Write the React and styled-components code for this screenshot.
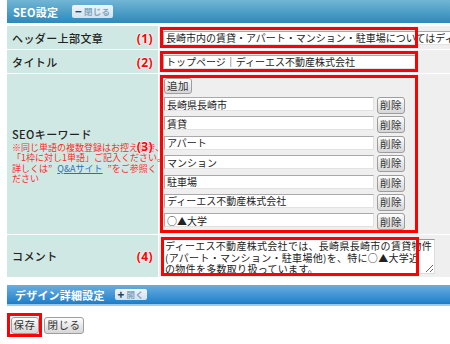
import React from "react";
import styled, { createGlobalStyle } from "styled-components";

const GlobalStyle = createGlobalStyle`
  html, body {
    margin: 0;
    padding: 0;
    background: #fff;
    overflow: hidden;
  }
  body {
    font-family: "Noto Sans CJK JP", "Noto Sans", sans-serif;
    color: #333;
  }
`;

const Page = styled.div`
  width: 450px;
  height: 344px;
  box-sizing: border-box;
  padding-left: 7px;
  overflow: hidden;
`;

const PanelBar = styled.div`
  height: ${(p) => p.$h}px;
  display: flex;
  align-items: center;
  gap: ${(p) => p.$gap}px;
  padding-left: ${(p) => p.$pad}px;
  box-sizing: border-box;
  background: ${(p) =>
    p.$tone === "blue"
      ? "linear-gradient(#6aaedf, #2a86cc 85%, #1f7cc4)"
      : "linear-gradient(#72b6d4, #3a92c0 80%, #2e89bb)"};
  border-bottom: ${(p) => (p.$tone === "blue" ? "2px solid #9ccbec" : "none")};
  color: #fff;
  font-size: 11px;
  font-weight: bold;
  letter-spacing: 0.2px;
`;

const ToggleButton = styled.span`
  display: inline-flex;
  align-items: center;
  gap: 2px;
  height: ${(p) => p.$h}px;
  padding: 0 3px;
  border-radius: 2px;
  background: linear-gradient(#eef4f8, #d3e2ec);
  color: #7ea6c0;
  font-size: 8.5px;
  font-weight: bold;
  line-height: 1;
  b {
    color: #1d4b6b;
    font-size: 11px;
  }
`;

const FormGrid = styled.div`
  margin-top: 3px;
  display: grid;
  grid-template-columns: 151px 1fr;
  grid-template-rows: 23px 23px 160px 42px;
  gap: 1px;
  background: #fff;
`;

const LabelCell = styled.div`
  position: relative;
  display: flex;
  align-items: center;
  padding-left: 5px;
  background: #d0e8e3;
  font-size: 11px;
  font-weight: 500;
  color: #222;
  letter-spacing: 0.4px;
`;

const Marker = styled.span`
  position: absolute;
  right: 5px;
  top: ${(p) => (p.$top != null ? `${p.$top}px` : "50%")};
  transform: ${(p) => (p.$top != null ? "none" : "translateY(-50%)")};
  font-family: "Noto Sans", sans-serif;
  font-size: 12px;
  font-weight: bold;
  color: #f00;
  text-shadow: 0 0 2px #fff, 0 0 2px #fff;
`;

const ValueCell = styled.div`
  background: #efefef;
  padding: ${(p) => p.$pad || "1px 1px"};
  box-sizing: border-box;
`;

const Marked = styled.div`
  position: relative;
  width: ${(p) => p.$w}px;
  height: ${(p) => (p.$h ? `${p.$h}px` : "100%")};
  box-sizing: border-box;
  padding: ${(p) => p.$pad || "3px"};
  display: flex;
  flex-direction: column;
  justify-content: ${(p) => p.$justify || "center"};
  &::after {
    content: "";
    position: absolute;
    inset: 0;
    border: 3px solid #f00;
    pointer-events: none;
  }
`;

const TextInput = styled.input`
  width: ${(p) => p.$w}px;
  height: 14px;
  flex: none;
  box-sizing: border-box;
  margin: 0;
  padding: 0 2px;
  border: 1px solid;
  border-color: #a9a9a9 #e2e2e2 #e2e2e2 #a9a9a9;
  background: #fff;
  font-family: "Noto Sans CJK JP", sans-serif;
  font-size: 10px;
  line-height: 12px;
  color: #222;
  outline: none;
`;

const Note = styled.div`
  margin-top: 1px;
  font-size: 9px;
  line-height: 10.5px;
  font-weight: normal;
  color: #ff2b2b;
  white-space: nowrap;
  letter-spacing: 0;
  a {
    color: #2f6fb8;
    text-decoration: underline;
    margin: 0 5px;
  }
`;

const LabelBlock = styled.div`
  margin-top: 2px;
`;

const KeywordList = styled.div`
  display: flex;
  flex-direction: column;
  gap: 2.4px;
  margin-top: 3px;
`;

const KeywordRow = styled.div`
  display: flex;
  align-items: flex-start;
  gap: 3px;
  height: 17px;
`;

const Button = styled.button`
  flex: none;
  width: ${(p) => p.$w}px;
  height: ${(p) => p.$h || 17}px;
  margin: 0;
  padding: 0;
  box-sizing: border-box;
  border: 1px solid #9d9d9d;
  border-radius: 3px;
  background: linear-gradient(#fdfdfd, #e9e9e9 50%, #d6d6d6);
  font-family: "Noto Sans CJK JP", sans-serif;
  font-size: 10.5px;
  line-height: 1;
  color: #333;
  letter-spacing: 0.5px;
`;

const Textarea = styled.textarea`
  width: 272px;
  height: 35px;
  flex: none;
  margin: 0;
  padding: 0 1px;
  box-sizing: border-box;
  border: 1px solid;
  border-color: #9a9a9a #dcdcdc #dcdcdc #9a9a9a;
  background: #fff;
  font-family: "Noto Sans CJK JP", sans-serif;
  font-size: 10px;
  line-height: 11.5px;
  letter-spacing: 0.3px;
  color: #222;
  white-space: pre;
  overflow: hidden;
  outline: none;
`;

const Spacer = styled.div`
  height: ${(p) => p.$h}px;
`;

const Footer = styled.div`
  margin-top: 7px;
  display: flex;
  align-items: center;
  gap: 2px;
`;

const keywords = [
  "長崎県長崎市",
  "賃貸",
  "アパート",
  "マンション",
  "駐車場",
  "ディーエス不動産株式会社",
  "○▲大学",
];

const comment =
  "ディーエス不動産株式会社では、長崎県長崎市の賃貸物件\n(アパート・マンション・駐車場他)を、特に○▲大学近\nの物件を多数取り扱っています。";

export default function App() {
  return (
    <>
      <GlobalStyle />
      <Page>
        <PanelBar $h={23} $gap={14} $pad={6}>
          SEO設定
          <ToggleButton $h={13}>
            <b>−</b>閉じる
          </ToggleButton>
        </PanelBar>

        <FormGrid>
          <LabelCell>
            ヘッダー上部文章
            <Marker>(1)</Marker>
          </LabelCell>
          <ValueCell>
            <Marked $w={258}>
              <TextInput
                $w={292}
                readOnly
                defaultValue="長崎市内の賃貸・アパート・マンション・駐車場についてはディーエス不動産株式会社へ"
              />
            </Marked>
          </ValueCell>

          <LabelCell>
            タイトル
            <Marker>(2)</Marker>
          </LabelCell>
          <ValueCell>
            <Marked $w={258}>
              <TextInput
                $w={253}
                readOnly
                defaultValue="トップページ｜ディーエス不動産株式会社"
              />
            </Marked>
          </ValueCell>

          <LabelCell>
            <LabelBlock>
              SEOキーワード
              <Note>
                ※同じ単語の複数登録はお控え頂き、
                <br />
                「1枠に対し1単語」ご記入ください。
                <br />
                詳しくは”<a href="#qa">Q&amp;Aサイト</a>”をご参照く
                <br />
                ださい
              </Note>
            </LabelBlock>
            <Marker $top={64}>(3)</Marker>
          </LabelCell>
          <ValueCell>
            <Marked $w={258} $justify="flex-start" $pad="3px 3px 3px 4px">
              <Button $w={28} $h={16}>
                追加
              </Button>
              <KeywordList>
                {keywords.map((k) => (
                  <KeywordRow key={k}>
                    <TextInput $w={210} readOnly defaultValue={k} />
                    <Button $w={28}>削除</Button>
                  </KeywordRow>
                ))}
              </KeywordList>
            </Marked>
          </ValueCell>

          <LabelCell>
            コメント
            <Marker>(4)</Marker>
          </LabelCell>
          <ValueCell $pad="2px 1px 1px 2px">
            <Marked $w={258} $h={39} $pad="2px">
              <Textarea readOnly wrap="off" defaultValue={comment} />
            </Marked>
          </ValueCell>
        </FormGrid>

        <Spacer $h={8} />
        <PanelBar $tone="blue" $h={21} $gap={10} $pad={8}>
          デザイン詳細設定
          <ToggleButton $h={11}>
            <b>+</b>開く
          </ToggleButton>
        </PanelBar>

        <Footer>
          <Marked $w={35} $h={24} $pad="3px" style={{ alignItems: "center" }}>
            <Button $w={28}>保存</Button>
          </Marked>
          <Button $w={40}>閉じる</Button>
        </Footer>
      </Page>
    </>
  );
}
